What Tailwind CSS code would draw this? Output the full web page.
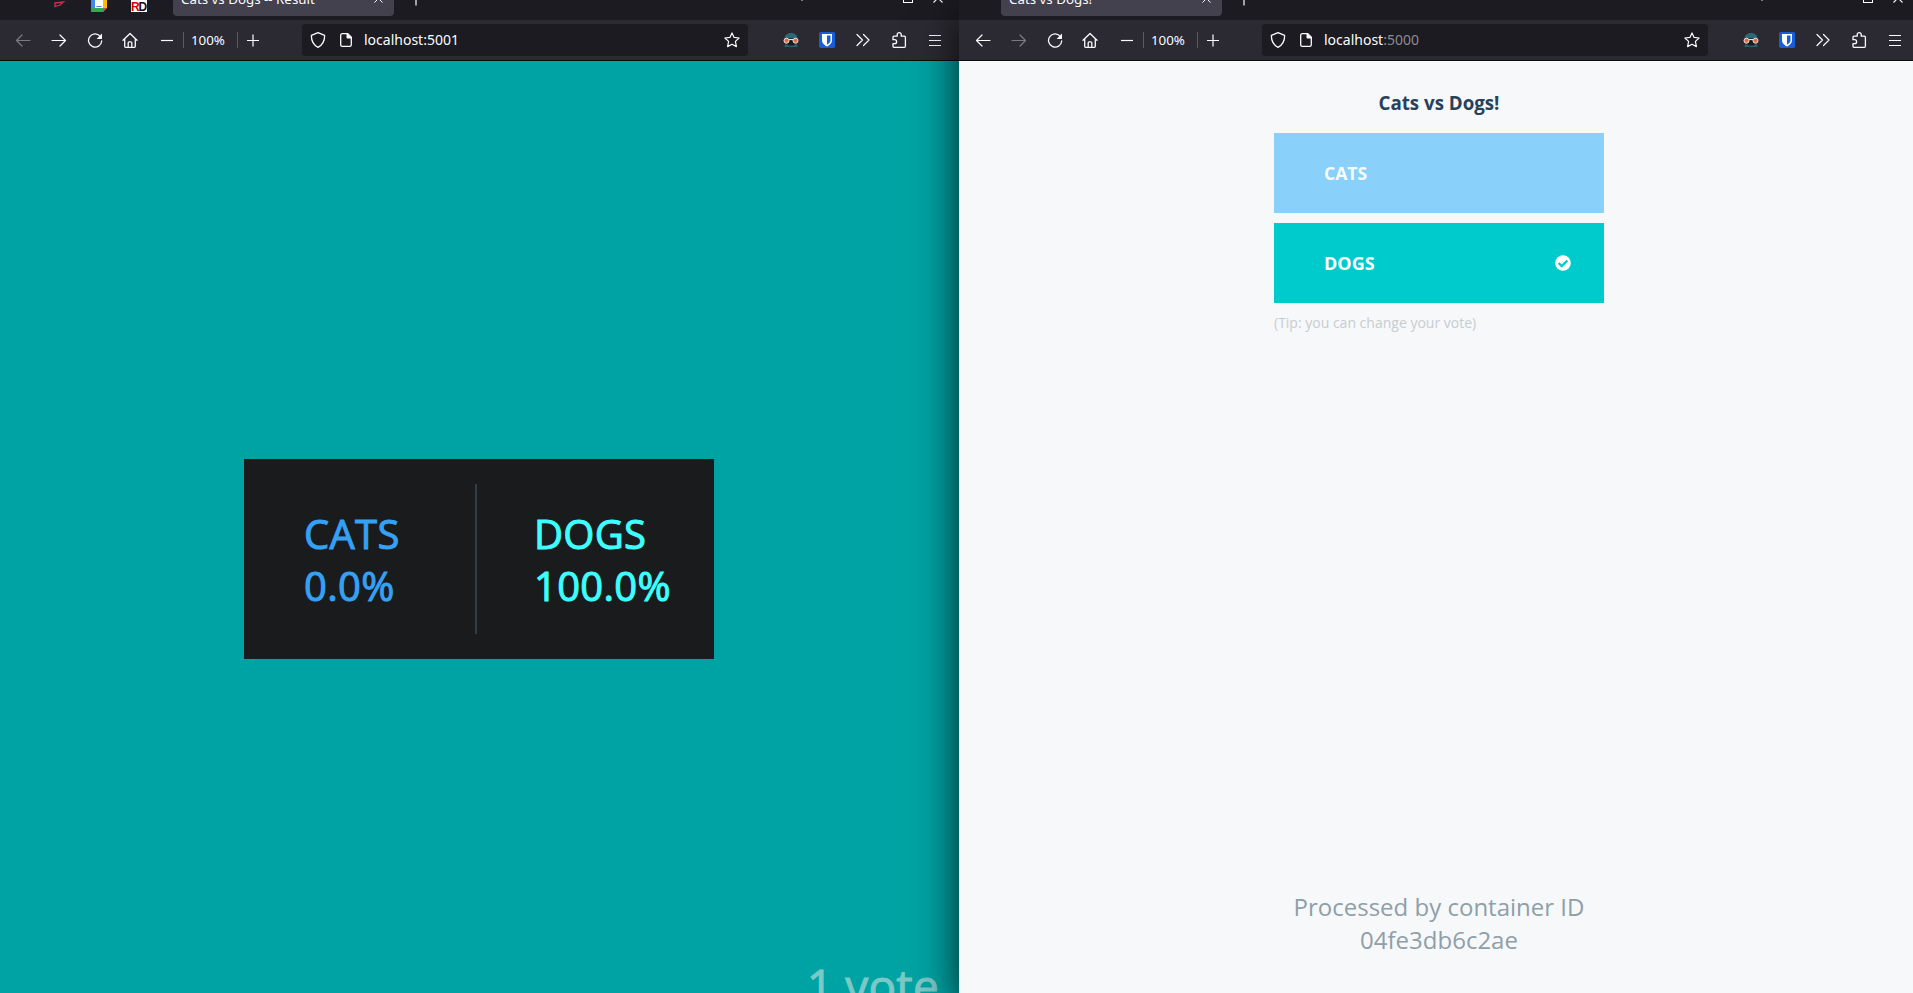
<!DOCTYPE html>
<html lang="en">
<head>
<meta charset="utf-8">
<title>Cats vs Dogs</title>
<script src="https://cdn.jsdelivr.net/npm/@tailwindcss/browser@4"></script>
</head>
<body class="h-[993px] w-[1913px] overflow-hidden bg-[#f7f8f9]">
<svg class="hidden">
  <defs>
    <symbol id="back" viewBox="0 0 16 16"><path d="M15 8.500H1.500M7 3 1.500 8.500 7 14" fill="none" stroke="currentColor" stroke-width="1.200" stroke-linecap="round" stroke-linejoin="round"/></symbol>
    <symbol id="forward" viewBox="0 0 16 16"><path d="M1 8.500h13.500M9 3l5.500 5.500L9 14" fill="none" stroke="currentColor" stroke-width="1.200" stroke-linecap="round" stroke-linejoin="round"/></symbol>
    <symbol id="reload" viewBox="0 0 16 16"><path d="M13.600 4.800A6.600 6.600 0 1 0 14.700 9" fill="none" stroke="currentColor" stroke-width="1.300" stroke-linecap="round"/><path d="M15 1.600v4.900a.5.5 0 0 1-.5.5H9.600z" fill="currentColor"/></symbol>
    <symbol id="home" viewBox="0 0 16 16"><path d="M1 8.300 8 1.500l7 6.800M2.700 7v7.300q0 1 1 1h8.600q1 0 1-1V7M6.200 15v-4.200q0-1 1-1h1.600q1 0 1 1V15" fill="none" stroke="currentColor" stroke-width="1.300" stroke-linecap="round" stroke-linejoin="round"/></symbol>
    <symbol id="minus" viewBox="0 0 16 16"><path d="M2 8.500h12" stroke="currentColor" stroke-width="1.200"/></symbol>
    <symbol id="plus" viewBox="0 0 16 16"><path d="M2 8.500h12M8 2.500v12" stroke="currentColor" stroke-width="1.200"/></symbol>
    <symbol id="shield" viewBox="0 0 16 16"><path d="M8 .7 1.400 3.400C1.200 9 3 12.800 8 15.400 13 12.800 14.800 9 14.600 3.400Z" fill="none" stroke="currentColor" stroke-width="1.300" stroke-linejoin="round"/></symbol>
    <symbol id="page" viewBox="0 0 16 16"><path d="M9 1.700H4.300q-1.600 0-1.600 1.600v9.400q0 1.600 1.600 1.600h7.400q1.600 0 1.600-1.600V6" fill="none" stroke="currentColor" stroke-width="1.300"/><path d="M8.500 1H10l4 4v1.500H9.500q-1 0-1-1z" fill="currentColor"/></symbol>
    <symbol id="star" viewBox="0 0 16 16"><path d="m8 .9 2.100 4.500 5 .6-3.700 3.400 1 5.200L8 12.200l-4.400 2.400 1-5.200L.9 6l5-.6z" fill="none" stroke="currentColor" stroke-width="1.200" stroke-linejoin="round"/></symbol>
    <symbol id="goggles" viewBox="0 0 16 16"><path d="M1.500 7C1.500 3 4.500 1 8 1s6.500 2 6.500 6z" fill="#2b6a79"/><path d="M4 6h8v7H4z" fill="#14191d"/><path d="M2 12.500h12L14.500 15h-13z" fill="#28606c"/><path d="M5 12h6v3H5z" fill="#172025"/><path d="M5 14.200h6" stroke="#3b7985"/><path d="M5.500 7.500h5" stroke="#e8e2dc" stroke-width="1.200"/><circle cx="3.500" cy="8.700" r="2.500" fill="#e36850" stroke="#eee0d8"/><circle cx="12.500" cy="8.700" r="2.500" fill="#e36850" stroke="#eee0d8"/></symbol>
    <symbol id="vault" viewBox="0 0 16 16"><rect width="16" height="16" rx="1.800" fill="#175ddc"/><path d="M3 2h10v6.500c0 2.700-2.500 4.700-5 6-2.500-1.300-5-3.300-5-6z" fill="#fff"/><path d="M8 3.500h3.500v5C11.500 10.200 10 11.500 8 12.800z" fill="#175ddc"/></symbol>
    <symbol id="more" viewBox="0 0 16 16"><path d="m2 2.500 5.500 5.500L2 13.500M8.500 2.500 14 8l-5.500 5.500" fill="none" stroke="currentColor" stroke-width="1.200" stroke-linecap="round" stroke-linejoin="round"/></symbol>
    <symbol id="puzzle" viewBox="0 0 16 16"><path d="M6.200 4.200V2.700a2 2 0 0 1 4 0v1.500h3.200q1 0 1 1v9.100q0 1-1 1H3q-1 0-1-1v-2.600h1.600a2 2 0 0 0 0-4H2V5.200q0-1 1-1z" fill="none" stroke="currentColor" stroke-width="1.300" stroke-linejoin="round"/></symbol>
    <symbol id="menu" viewBox="0 0 16 16"><path d="M2 3.500h12M2 8.500h12M2 13.500h12" stroke="currentColor" stroke-width="1.200"/></symbol>
    <symbol id="close" viewBox="0 0 10 10"><path d="m.5.5 9 9m0-9-9 9" stroke="currentColor" stroke-width="1.100"/></symbol>
  </defs>
</svg>

<div class="flex h-full w-full font-['Noto_Sans',sans-serif] text-[#fbfbfe]">

  <!-- Result window -->
  <section class="flex h-full w-[959px] shrink-0 flex-col overflow-hidden bg-[#00a3a3]">
    <div class="h-5 shrink-0 overflow-hidden bg-[#1c1b22]">
      <div class="-mt-5 flex h-9 items-center">
        <svg class="ml-[50px] h-4 w-4 shrink-0 translate-y-[2px]" viewBox="0 0 16 16"><path d="M5 11 13.500 10l-3.500 3-5 1.700z" fill="none" stroke="#c8324f" stroke-width="1.300"/></svg>
        <svg class="ml-[25px] h-4 w-4 shrink-0 translate-y-[6px]" viewBox="0 0 16 16"><path d="M0 0h16v12l-4 4H1q-1 0-1-1z" fill="#4285f4"/><path d="M4 4h8v8H4z" fill="#fff"/><path d="M5.500 10.500h5" stroke="#4285f4"/><path d="M0 12h12v4H1q-1 0-1-1z" fill="#34a853"/><path d="M12 3h4v9h-4z" fill="#fbbc04"/><path d="M12 12h4l-4 4z" fill="#ea4335"/></svg>
        <svg class="ml-6 h-4 w-4 shrink-0 translate-y-[6px]" viewBox="0 0 16 16"><path d="M0 0h16v16H0z" fill="#fff"/><text x="0" y="14.500" font-family="Liberation Sans" font-weight="700" font-size="12" fill="#d40000">R</text><text x="7.500" y="14.500" font-family="Liberation Sans" font-weight="700" font-size="12" fill="#111">D</text></svg>
        <div class="ml-[26px] flex h-9 w-[221px] shrink-0 items-center justify-between rounded bg-[#42414d] pr-[11px] pl-2">
          <span class="pt-[3px] text-[13.33px]">Cats vs Dogs -- Result</span>
          <svg class="h-[9px] w-[9px]"><use href="#close"/></svg>
        </div>
        <svg class="ml-[14px] h-4 w-4 translate-y-px"><use href="#plus"/></svg>
        <div class="mr-4 ml-auto flex items-center">
          <svg class="mr-[95px] h-2 w-3" viewBox="0 0 12 8"><path d="m1 0 5 6 5-6" fill="none" stroke="currentColor" stroke-width="1.300"/></svg>
          <span class="mr-5 h-[10px] w-[10px] border border-white"></span>
          <svg class="h-[10px] w-[10px]"><use href="#close"/></svg>
        </div>
      </div>
    </div>
    <div class="flex h-[41px] shrink-0 items-center border-b border-[#0c0c0d] bg-[#2b2a33] pr-4">
      <svg class="ml-[15px] h-4 w-4 shrink-0 text-[#7b7a81]"><use href="#back"/></svg>
      <svg class="ml-5 h-4 w-4 shrink-0"><use href="#forward"/></svg>
      <svg class="ml-5 h-4 w-4 shrink-0"><use href="#reload"/></svg>
      <svg class="mr-px ml-[19px] h-4 w-4 shrink-0"><use href="#home"/></svg>
      <svg class="ml-5 h-4 w-4 shrink-0"><use href="#minus"/></svg>
      <div class="ml-2 flex h-4 w-[55px] shrink-0 items-center border-x border-[#5b5b64] pt-[2px] pl-[7px] text-[13.33px]">100%</div>
      <svg class="ml-[7px] h-4 w-4 shrink-0"><use href="#plus"/></svg>
      <div class="ml-[41px] flex h-8 w-[446px] shrink-0 items-center rounded bg-[#1c1b22] px-2">
        <svg class="h-4 w-4"><use href="#shield"/></svg>
        <svg class="ml-3 h-4 w-4"><use href="#page"/></svg>
        <span class="ml-[10px] pb-px text-[14px]">localhost:5001</span>
        <svg class="ml-auto h-4 w-4"><use href="#star"/></svg>
      </div>
      <div class="ml-auto flex gap-5">
        <svg class="h-4 w-4"><use href="#goggles"/></svg>
        <svg class="h-4 w-4"><use href="#vault"/></svg>
        <svg class="h-4 w-4"><use href="#more"/></svg>
        <svg class="h-4 w-4"><use href="#puzzle"/></svg>
        <svg class="h-4 w-4"><use href="#menu"/></svg>
      </div>
    </div>
    <main class="flex grow flex-col font-['Open_Sans',sans-serif]">
      <div class="mt-[398px] ml-[244px] flex h-[200px] w-[470px] shrink-0 items-center bg-[#1a1b1d] text-[40px] leading-[52px] tracking-[0.3px] [-webkit-text-stroke:1px_currentColor]">
        <div class="w-[231px] pt-[2px] pl-[60px] text-[#35a1f4]"><div>CATS</div><div>0.0%</div></div>
        <div class="h-[150px] w-[2px] bg-[#343d42]"></div>
        <div class="pt-[2px] pl-[57px] text-[#3dffff]"><div>DOGS</div><div>100.0%</div></div>
      </div>
      <div class="mt-[295px] mr-5 shrink-0 text-right text-[46px] leading-[63px] tracking-[0.2px] text-[#7ac9c7] [-webkit-text-stroke:1px_currentColor]">1 vote</div>
    </main>
  </section>

  <!-- Voting window -->
  <section class="relative flex h-full w-[954px] shrink-0 flex-col bg-[#f7f8f9] shadow-[0_16px_40px_rgba(0,0,0,0.8)]">
    <div class="h-5 shrink-0 overflow-hidden bg-[#1c1b22]">
      <div class="-mt-5 flex h-9 items-center">
        <div class="ml-[42px] flex h-9 w-[221px] shrink-0 items-center justify-between rounded bg-[#42414d] pr-[11px] pl-2">
          <span class="pt-[3px] text-[13.33px]">Cats vs Dogs!</span>
          <svg class="h-[9px] w-[9px]"><use href="#close"/></svg>
        </div>
        <svg class="ml-[14px] h-4 w-4 translate-y-px"><use href="#plus"/></svg>
        <div class="mr-[10px] ml-auto flex items-center">
          <svg class="mr-[95px] h-2 w-3" viewBox="0 0 12 8"><path d="m1 0 5 6 5-6" fill="none" stroke="currentColor" stroke-width="1.300"/></svg>
          <span class="mr-5 h-[10px] w-[10px] border border-white"></span>
          <svg class="h-[10px] w-[10px]"><use href="#close"/></svg>
        </div>
      </div>
    </div>
    <div class="flex h-[41px] shrink-0 items-center border-b border-[#0c0c0d] bg-[#2b2a33] pr-[10px]">
      <svg class="ml-4 h-4 w-4 shrink-0"><use href="#back"/></svg>
      <svg class="ml-5 h-4 w-4 shrink-0 text-[#7b7a81]"><use href="#forward"/></svg>
      <svg class="ml-5 h-4 w-4 shrink-0"><use href="#reload"/></svg>
      <svg class="mr-px ml-[19px] h-4 w-4 shrink-0"><use href="#home"/></svg>
      <svg class="ml-5 h-4 w-4 shrink-0"><use href="#minus"/></svg>
      <div class="ml-2 flex h-4 w-[55px] shrink-0 items-center border-x border-[#5b5b64] pt-[2px] pl-[7px] text-[13.33px]">100%</div>
      <svg class="ml-[7px] h-4 w-4 shrink-0"><use href="#plus"/></svg>
      <div class="ml-[41px] flex h-8 w-[446px] shrink-0 items-center rounded bg-[#1c1b22] px-2">
        <svg class="h-4 w-4"><use href="#shield"/></svg>
        <svg class="ml-3 h-4 w-4"><use href="#page"/></svg>
        <span class="ml-[10px] pb-px text-[14px]">localhost<span class="text-[#8c8b92]">:5000</span></span>
        <svg class="ml-auto h-4 w-4"><use href="#star"/></svg>
      </div>
      <div class="ml-auto flex gap-5">
        <svg class="h-4 w-4"><use href="#goggles"/></svg>
        <svg class="h-4 w-4"><use href="#vault"/></svg>
        <svg class="h-4 w-4"><use href="#more"/></svg>
        <svg class="h-4 w-4"><use href="#puzzle"/></svg>
        <svg class="h-4 w-4"><use href="#menu"/></svg>
      </div>
    </div>
    <main class="ml-[315px] flex w-[330px] grow flex-col font-['Open_Sans',sans-serif]">
      <h1 class="mt-[29px] text-center text-[18.72px] leading-[26px] font-bold text-[#26425a]">Cats vs Dogs!</h1>
      <button class="mt-[17px] flex h-20 shrink-0 items-center bg-[#89d1fa] pl-[50px] text-[17.6px] font-bold text-white/95">CATS</button>
      <button class="mt-[10px] flex h-20 shrink-0 items-center justify-between bg-[#00cbcc] pr-[33px] pl-[50px] text-[18px] font-bold text-white">
        <span>DOGS</span>
        <svg class="h-4 w-4" viewBox="0 0 16 16"><circle cx="8" cy="8" r="7.800" fill="#fff"/><path d="m3.600 8 3.100 3.100 5.700-5.600" fill="none" stroke="#00cbcc" stroke-width="2.300"/></svg>
      </button>
      <p class="mt-[10px] text-[14px] leading-[19px] text-[#c6cdd2]">(Tip: you can change your vote)</p>
      <p class="mt-auto mb-[37px] text-center text-[24px] leading-[33px] text-[#8f9fa9]">Processed by container ID<br>04fe3db6c2ae</p>
    </main>
  </section>
</div>
</body>
</html>
